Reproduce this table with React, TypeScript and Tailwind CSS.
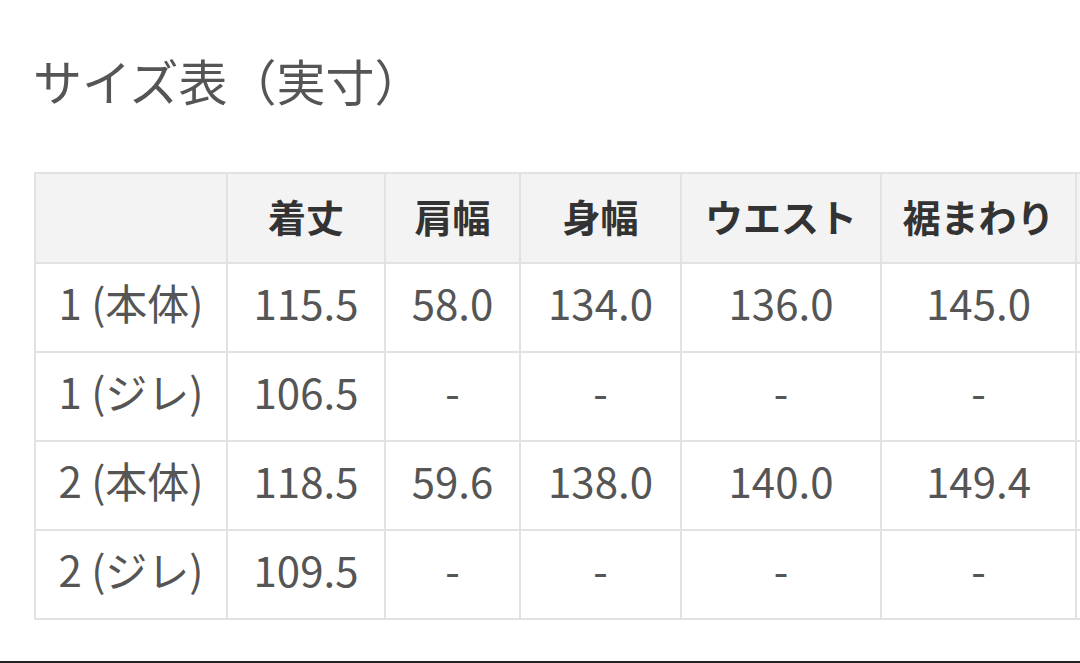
import React from "react";

const SizeTable = () => {
  const headers = ["", "着丈", "肩幅", "身幅", "ウエスト", "裾まわり", ""];
  const rows = [
    ["1 (本体)", "115.5", "58.0", "134.0", "136.0", "145.0"],
    ["1 (ジレ)", "106.5", "-", "-", "-", "-"],
    ["2 (本体)", "118.5", "59.6", "138.0", "140.0", "149.4"],
    ["2 (ジレ)", "109.5", "-", "-", "-", "-"],
  ];
  const widths = ["w-[192px]", "w-[158px]", "w-[135px]", "w-[161px]", "w-[200px]", "w-[195px]", "w-[120px]"];

  return (
    <div className="relative flex h-[663px] w-[1080px] flex-col overflow-hidden bg-white font-['Noto_Sans_CJK_JP',sans-serif]">
      {/* Title */}
      <h1 className="pl-[33px] pt-[55px] text-[49px] font-normal leading-none text-[#555]">
        サイズ表（実寸）
      </h1>

      {/* Table */}
      <div className="mt-[68px] pl-[34px]">
        <table className="w-[1161px] table-fixed border-collapse">
          <thead>
            <tr className="h-[90px] bg-[#f3f3f3]">
              {headers.map((h, i) => (
                <th
                  key={i}
                  className={`${widths[i]} border-2 border-[#e2e2e2] p-0 pb-[5px] text-center text-[38px] font-bold leading-none text-[#333]`}
                >
                  {h}
                </th>
              ))}
            </tr>
          </thead>
          <tbody>
            {rows.map((row, r) => (
              <tr key={r} className="h-[89px]">
                {row.map((cell, c) => (
                  <td
                    key={c}
                    className="border-2 border-[#e2e2e2] p-0 pb-[12px] text-center text-[42px] leading-none text-[#555]"
                  >
                    {cell}
                  </td>
                ))}
                <td className="border-2 border-[#e2e2e2] p-0"></td>
              </tr>
            ))}
          </tbody>
        </table>
      </div>

      {/* Bottom edge */}
      <div className="mt-auto h-[2px] w-full bg-[#222]"></div>
    </div>
  );
};

export default SizeTable;
